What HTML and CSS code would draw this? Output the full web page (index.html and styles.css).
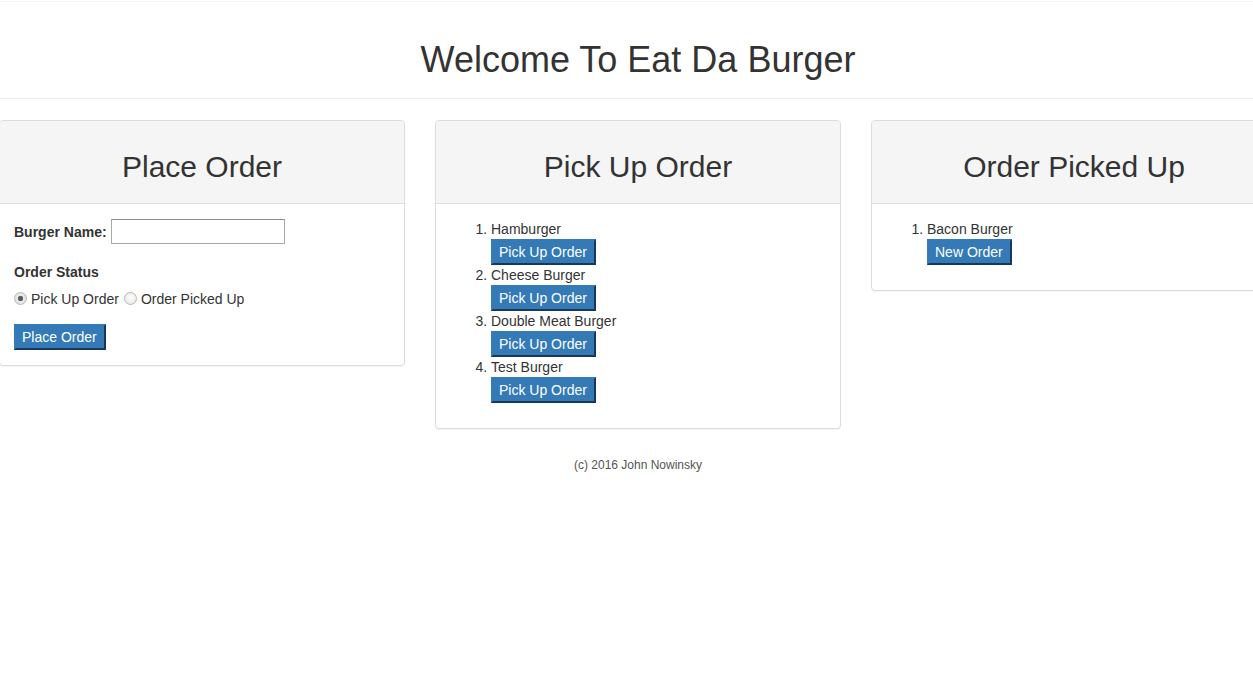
FILE: index.html
```html
<!DOCTYPE html>
<html lang="en">
<head>
<meta charset="utf-8">
<title>Eat Da Burger</title>
<link rel="stylesheet" href="styles.css">
</head>
<body>
<div class="page">
  <header class="site-header">
    <h1 class="site-title">Welcome To Eat Da Burger</h1>
  </header>
  <hr class="divider">
  <main class="columns">
    <section class="panel">
      <div class="panel-heading"><h2 class="panel-title">Place Order</h2></div>
      <div class="panel-body">
        <form class="order-form">
          <div class="field-row">
            <label class="field-label" for="burger">Burger Name:</label> <input class="text-input" id="burger" type="text">
          </div>
          <div class="status-label">Order Status</div>
          <div class="radio-row">
            <input class="radio" type="radio" name="status" checked><span class="radio-text">Pick Up Order</span> <input class="radio" type="radio" name="status"><span class="radio-text">Order Picked Up</span>
          </div>
          <button class="btn" type="button">Place Order</button>
        </form>
      </div>
    </section>
    <section class="panel">
      <div class="panel-heading"><h2 class="panel-title">Pick Up Order</h2></div>
      <div class="panel-body">
        <ol class="order-list">
          <li><div class="item-name">Hamburger</div><button class="btn" type="button">Pick Up Order</button></li>
          <li><div class="item-name">Cheese Burger</div><button class="btn" type="button">Pick Up Order</button></li>
          <li><div class="item-name">Double Meat Burger</div><button class="btn" type="button">Pick Up Order</button></li>
          <li><div class="item-name">Test Burger</div><button class="btn" type="button">Pick Up Order</button></li>
        </ol>
      </div>
    </section>
    <section class="panel">
      <div class="panel-heading"><h2 class="panel-title">Order Picked Up</h2></div>
      <div class="panel-body">
        <ol class="order-list">
          <li><div class="item-name">Bacon Burger</div><button class="btn" type="button">New Order</button></li>
        </ol>
      </div>
    </section>
  </main>
  <footer class="site-footer">(c) 2016 John Nowinsky</footer>
</div>
</body>
</html>
```

FILE: styles.css
```css
html, body {
  margin: 0;
  padding: 0;
  overflow: hidden;
  background: #fff;
}

body {
  font-family: "Liberation Sans", Arial, Helvetica, sans-serif;
  font-size: 14px;
  line-height: 20px;
  color: #333;
}

.page {
  width: 1278px;
  margin-left: -1px;
  border-top: 1px solid #f6f6f6;
  margin-top: 1px;
}

.site-header {
  text-align: center;
}

.site-title {
  margin: 38px 0 18px;
  font-size: 36px;
  line-height: 40px;
  font-weight: 400;
  color: #333;
}

.divider {
  margin: 0 0 21px;
  border: 0;
  border-top: 1px solid #eee;
  height: 0;
}

.columns {
  display: flex;
  align-items: flex-start;
  gap: 30px;
}

.panel {
  width: 406px;
  flex: 0 0 406px;
  box-sizing: border-box;
  border: 1px solid #ddd;
  border-radius: 4px;
  box-shadow: 0 1px 1px rgba(0, 0, 0, 0.05);
  background: #fff;
  margin-bottom: 20px;
}

.panel-heading {
  background: #f5f5f5;
  border-bottom: 1px solid #ddd;
  border-radius: 3px 3px 0 0;
  padding: 10px 15px;
  text-align: center;
}

.panel-title {
  margin: 19px 0 10px;
  font-size: 30px;
  line-height: 33px;
  font-weight: 400;
  color: #333;
}

.panel-body {
  padding: 15px;
}

.order-form {
  margin: 0;
  margin-left: -1px;
}

.field-row {
  height: 25px;
  line-height: 27px;
}

.field-label {
  font-weight: 700;
}

.text-input {
  box-sizing: border-box;
  width: 174px;
  height: 25px;
  margin: 0 0 0 1px;
  padding: 1px 4px;
  border: 1px solid #a9a9a9;
  border-top-color: #8e8e8e;
  font-family: inherit;
  font-size: 13px;
  vertical-align: top;
  background: #fff;
}

.status-label {
  margin-top: 18px;
  font-weight: 700;
}

.radio-row {
  margin-top: 7px;
  display: flex;
  align-items: center;
}

.radio {
  appearance: none;
  -webkit-appearance: none;
  box-sizing: border-box;
  width: 13px;
  height: 13px;
  margin: 0 4px 0 0;
  border: 1px solid #b8b8b8;
  border-radius: 50%;
  background: radial-gradient(circle at 50% 40%, #fdfdfd 0%, #e4e4e4 100%);
  position: relative;
  top: -1px;
}

.radio:checked {
  background: radial-gradient(circle, #555 0, #666 2.5px, #eaeaea 3px, #dcdcdc 100%);
}

.radio-text {
  margin-right: 5px;
}

.btn {
  display: inline-block;
  margin: 0;
  padding: 1px 7px 1px 6px;
  font-family: inherit;
  font-size: 14px;
  line-height: 20px;
  color: #fff;
  background: #337ab7;
  border: 2px solid #337ab7;
  border-right-color: #17385a;
  border-bottom-color: #17385a;
  border-radius: 0;
  cursor: pointer;
}

.order-form .btn {
  margin-top: 15px;
}

.order-list {
  margin: 0 0 10px -15px;
  padding-left: 55px;
}

.order-list li {
  margin: 0;
}

.item-name {
  line-height: 20px;
}

.site-footer {
  text-align: center;
  font-size: 12px;
  line-height: 17px;
  color: #555;
  padding-top: 8px;
}
```
